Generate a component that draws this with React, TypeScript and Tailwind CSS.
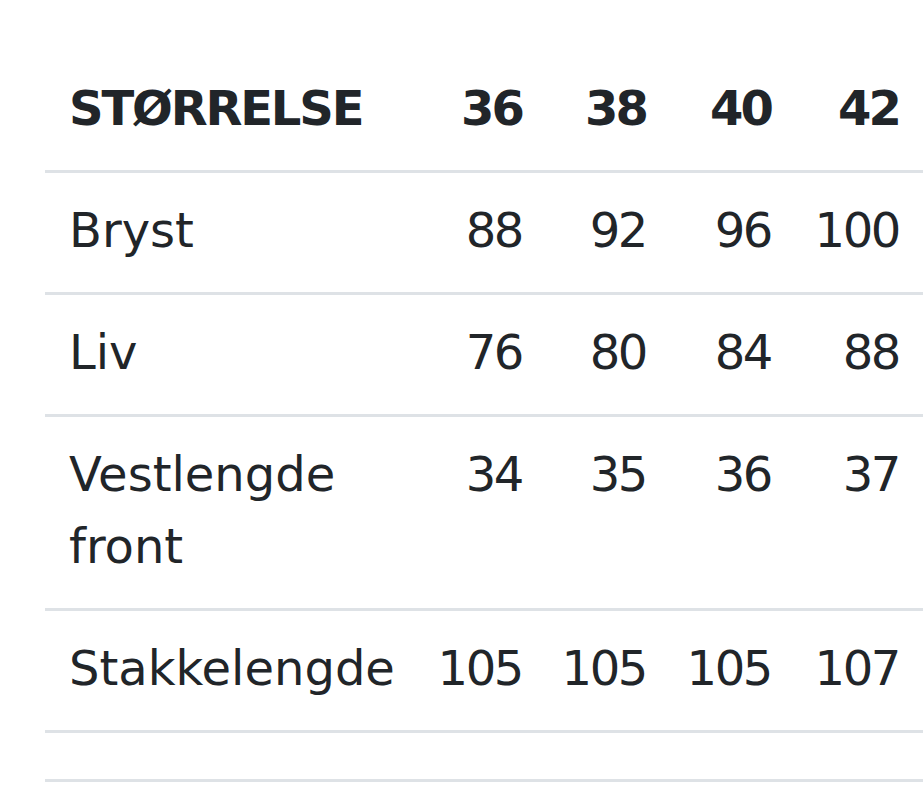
import React from "react";

const rows: { label: string; values: string[] }[] = [
  { label: "Bryst", values: ["88", "92", "96", "100"] },
  { label: "Liv", values: ["76", "80", "84", "88"] },
  { label: "Vestlengde front", values: ["34", "35", "36", "37"] },
  { label: "Stakkelengde", values: ["105", "105", "105", "107"] },
];

export default function App() {
  return (
    <div className="min-h-[791px] w-[923px] overflow-hidden bg-white pl-[45px] pt-[51px] font-['DejaVu_Sans',sans-serif] text-[#212529]">
      <table className="w-[878px] table-fixed border-collapse text-[48px] leading-[72px]">
        <colgroup>
          <col className="w-[377px]" />
          <col className="w-[124px]" />
          <col className="w-[124px]" />
          <col className="w-[125px]" />
          <col className="w-[128px]" />
        </colgroup>
        <thead>
          <tr className="border-b-[3px] border-[#dee2e6]">
            <th className="pb-[26px] pl-6 pr-2 pt-[21px] text-left align-top font-bold tracking-[-0.045em]">
              STØRRELSE
            </th>
            {["36", "38", "40", "42"].map((s) => (
              <th
                key={s}
                className="pb-[26px] pl-1 pr-6 pt-[21px] text-right align-top font-bold tracking-[-0.06em]"
              >
                {s}
              </th>
            ))}
          </tr>
        </thead>
        <tbody>
          {rows.map((r) => (
            <tr key={r.label} className="border-b-[3px] border-[#dee2e6]">
              <td className="pb-[26px] pl-6 pr-2 pt-[21px] text-left align-top font-normal">
                {r.label}
              </td>
              {r.values.map((v, i) => (
                <td
                  key={i}
                  className="whitespace-nowrap pb-[26px] pl-1 pr-6 pt-[21px] text-right align-top font-normal tracking-[-0.05em]"
                >
                  {v}
                </td>
              ))}
            </tr>
          ))}
          <tr className="border-b-[3px] border-[#dee2e6]">
            <td className="h-[49px] p-0" />
            <td className="h-[49px] p-0" />
            <td className="h-[49px] p-0" />
            <td className="h-[49px] p-0" />
            <td className="h-[49px] p-0" />
          </tr>
        </tbody>
      </table>
    </div>
  );
}
